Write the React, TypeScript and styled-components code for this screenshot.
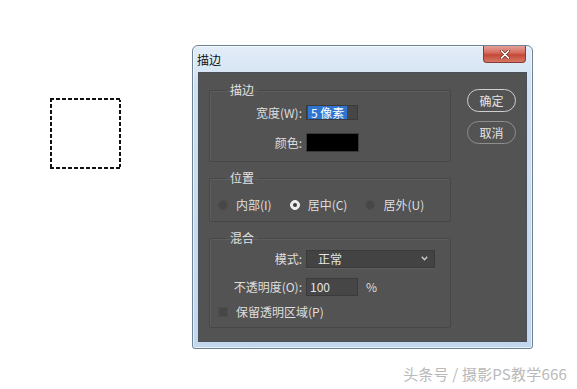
import React, { FC } from "react";
import styled, { createGlobalStyle } from "styled-components";

const GlobalStyle = createGlobalStyle`
  html, body {
    margin: 0;
    padding: 0;
    background: #ffffff;
  }
  body {
    font-family: "Noto Sans CJK SC", "Noto Sans", sans-serif;
  }
`;

const Page = styled.div`
  width: 577px;
  height: 389px;
  overflow: hidden;
  background: #ffffff;
`;

const Stage = styled.div`
  display: flex;
  align-items: flex-start;
  gap: 71px;
  padding: 45px 0 0 50px;
`;

const Marquee = styled.div`
  margin-top: 53px;
  width: 71px;
  height: 71px;
  box-sizing: border-box;
  background:
    repeating-linear-gradient(90deg, #111 0 4px, #fff 4px 6px) top / 100% 2px no-repeat,
    repeating-linear-gradient(90deg, #111 0 4px, #fff 4px 6px) bottom / 100% 2px no-repeat,
    repeating-linear-gradient(180deg, #111 0 4px, #fff 4px 6px) left / 2px 100% no-repeat,
    repeating-linear-gradient(180deg, #111 0 4px, #fff 4px 6px) right / 2px 100% no-repeat,
    #ffffff;
`;

const Dialog = styled.div`
  width: 339px;
  border: 1px solid #6e8296;
  border-radius: 6px 6px 3px 3px;
  background: linear-gradient(180deg, #e3edf8 0%, #cfe0f1 14%, #c3d7ec 100%);
  box-shadow: 0 0 0 1px rgba(255, 255, 255, 0.6) inset;
`;

const TitleBar = styled.div`
  height: 26px;
  display: flex;
  align-items: flex-start;
  justify-content: space-between;
  padding-left: 4px;
  padding-right: 6px;
`;

const Title = styled.span`
  margin-top: 7px;
  font-size: 12px;
  line-height: 14px;
  color: #111111;
`;

const CloseButton = styled.div`
  width: 43px;
  height: 17px;
  display: flex;
  align-items: center;
  justify-content: center;
  border: 1px solid #8a3a32;
  border-top: none;
  border-radius: 0 0 4px 4px;
  background: linear-gradient(180deg, #e5a197 0%, #d4685a 45%, #c44836 55%, #d77765 100%);
  box-sizing: border-box;
`;

const Panel = styled.div`
  margin: 0 5px 6px;
  height: 270px;
  box-sizing: border-box;
  background: #535353;
  border: 1px solid #4a5058;
  padding: 10px 10px 0 10px;
  display: flex;
  align-items: flex-start;
  gap: 16px;
`;

const Groups = styled.div`
  width: 242px;
  display: flex;
  flex-direction: column;
  gap: 9px;
`;

const Group = styled.fieldset<{ $pad: string }>`
  margin: 0;
  padding: ${(p) => p.$pad};
  min-width: 0;
  border: 1px solid #474747;
  box-shadow: 1px 1px 0 #5d5d5d inset;
  border-radius: 2px;
`;

const Legend = styled.legend`
  margin-left: 16px;
  padding: 0 4px;
  font-size: 12px;
  line-height: 14px;
  color: #e2e2e2;
`;

const FieldGrid = styled.div<{ $gap: number }>`
  display: grid;
  grid-template-columns: 92px auto;
  column-gap: 4px;
  row-gap: ${(p) => p.$gap}px;
  align-items: center;
`;

const Label = styled.span`
  text-align: right;
  font-size: 12px;
  line-height: 14px;
  color: #dedede;
  white-space: nowrap;
`;

const Cell = styled.div`
  display: flex;
  align-items: center;
  gap: 8px;
  height: 19px;
`;

const TextBox = styled.div<{ $w: number; $h: number }>`
  width: ${(p) => p.$w}px;
  height: ${(p) => p.$h}px;
  box-sizing: border-box;
  display: flex;
  align-items: center;
  padding-left: 3px;
  background: #464646;
  border: 1px solid #3b3b3b;
  font-size: 12px;
  color: #e6e6e6;
`;

const Selected = styled.span`
  margin-left: -2px;
  padding: 0 3px;
  height: 13px;
  line-height: 13px;
  background: #2f74d0;
  color: #ffffff;
  white-space: nowrap;
`;

const Swatch = styled.div`
  width: 53px;
  height: 19px;
  background: #000000;
  border: 1px solid #3a3a3a;
  box-sizing: border-box;
`;

const Select = styled.div`
  width: 129px;
  height: 18px;
  box-sizing: border-box;
  display: flex;
  align-items: center;
  justify-content: space-between;
  padding: 0 6px 0 11px;
  background: #434343;
  border: 1px solid #3a3a3a;
  box-shadow: 0 1px 0 #5e5e5e;
  font-size: 12px;
  color: #e6e6e6;
`;

const Unit = styled.span`
  font-size: 12px;
  color: #dedede;
`;

const OptionRow = styled.div<{ $gap: number; $top?: number }>`
  display: flex;
  align-items: center;
  gap: ${(p) => p.$gap}px;
  margin-top: ${(p) => p.$top ?? 0}px;
  padding-left: 8px;
  height: 18px;
`;

const Option = styled.label`
  display: flex;
  align-items: center;
  gap: 8px;
  font-size: 12px;
  line-height: 14px;
  color: #dedede;
  white-space: nowrap;
`;

const Radio = styled.span<{ $on?: boolean }>`
  width: 10px;
  height: 10px;
  border-radius: 50%;
  box-sizing: border-box;
  display: flex;
  align-items: center;
  justify-content: center;
  background: ${(p) => (p.$on ? "#ececec" : "#474747")};
  border: 1px solid ${(p) => (p.$on ? "#f4f4f4" : "#4d4d4d")};

  &::after {
    content: "";
    width: 4px;
    height: 4px;
    border-radius: 50%;
    background: ${(p) => (p.$on ? "#3a3a3a" : "transparent")};
  }
`;

const Check = styled.span`
  width: 10px;
  height: 10px;
  box-sizing: border-box;
  background: #474747;
  border: 1px solid #4d4d4d;
`;

const Buttons = styled.div`
  margin-top: 6px;
  display: flex;
  flex-direction: column;
  gap: 9px;
`;

const PillButton = styled.button<{ $primary?: boolean }>`
  width: 49px;
  height: 23px;
  padding: 0;
  border-radius: 12px;
  background: transparent;
  border: 1px solid ${(p) => (p.$primary ? "#cfcfcf" : "#8e8e8e")};
  color: #e4e4e4;
  font-family: "Noto Sans CJK SC", sans-serif;
  font-size: 12px;
  line-height: 14px;
`;

const Watermark = styled.div`
  margin-top: 15px;
  padding-right: 10px;
  text-align: right;
  font-size: 15px;
  line-height: 20px;
  color: #b9b9b9;
  letter-spacing: 0.2px;
`;

const App: FC = () => {
  return (
    <Page>
      <GlobalStyle />
      <Stage>
        <Marquee />
        <Dialog>
          <TitleBar>
            <Title>描边</Title>
            <CloseButton>
              <svg width="10" height="9" viewBox="0 0 10 9">
                <path
                  d="M1.5 1 L8.5 8 M8.5 1 L1.5 8"
                  stroke="#6b2a22"
                  strokeWidth="3"
                  strokeLinecap="round"
                />
                <path
                  d="M1.5 1 L8.5 8 M8.5 1 L1.5 8"
                  stroke="#ffffff"
                  strokeWidth="1.7"
                  strokeLinecap="round"
                />
              </svg>
            </CloseButton>
          </TitleBar>
          <Panel>
            <Groups>
              <Group $pad="6px 0 9px 0">
                <Legend>描边</Legend>
                <FieldGrid $gap={11}>
                  <Label>宽度(W):</Label>
                  <Cell>
                    <TextBox $w={52} $h={15}>
                      <Selected>5 像素</Selected>
                    </TextBox>
                  </Cell>
                  <Label>颜色:</Label>
                  <Cell>
                    <Swatch />
                  </Cell>
                </FieldGrid>
              </Group>
              <Group $pad="11px 0 7px 0">
                <Legend>位置</Legend>
                <OptionRow $gap={18}>
                  <Option>
                    <Radio />
                    内部(I)
                  </Option>
                  <Option>
                    <Radio $on />
                    居中(C)
                  </Option>
                  <Option>
                    <Radio />
                    居外(U)
                  </Option>
                </OptionRow>
              </Group>
              <Group $pad="4px 0 6px 0">
                <Legend>混合</Legend>
                <FieldGrid $gap={9}>
                  <Label>模式:</Label>
                  <Cell>
                    <Select>
                      正常
                      <svg width="7" height="5" viewBox="0 0 7 5">
                        <path
                          d="M0.8 0.8 L3.5 3.8 L6.2 0.8"
                          fill="none"
                          stroke="#d0d0d0"
                          strokeWidth="1.3"
                        />
                      </svg>
                    </Select>
                  </Cell>
                  <Label>不透明度(O):</Label>
                  <Cell>
                    <TextBox $w={52} $h={18}>
                      100
                    </TextBox>
                    <Unit>%</Unit>
                  </Cell>
                </FieldGrid>
                <OptionRow $gap={0} $top={7}>
                  <Option>
                    <Check />
                    保留透明区域(P)
                  </Option>
                </OptionRow>
              </Group>
            </Groups>
            <Buttons>
              <PillButton $primary>确定</PillButton>
              <PillButton>取消</PillButton>
            </Buttons>
          </Panel>
        </Dialog>
      </Stage>
      <Watermark>头条号 / 摄影PS教学666</Watermark>
    </Page>
  );
};

export default App;
